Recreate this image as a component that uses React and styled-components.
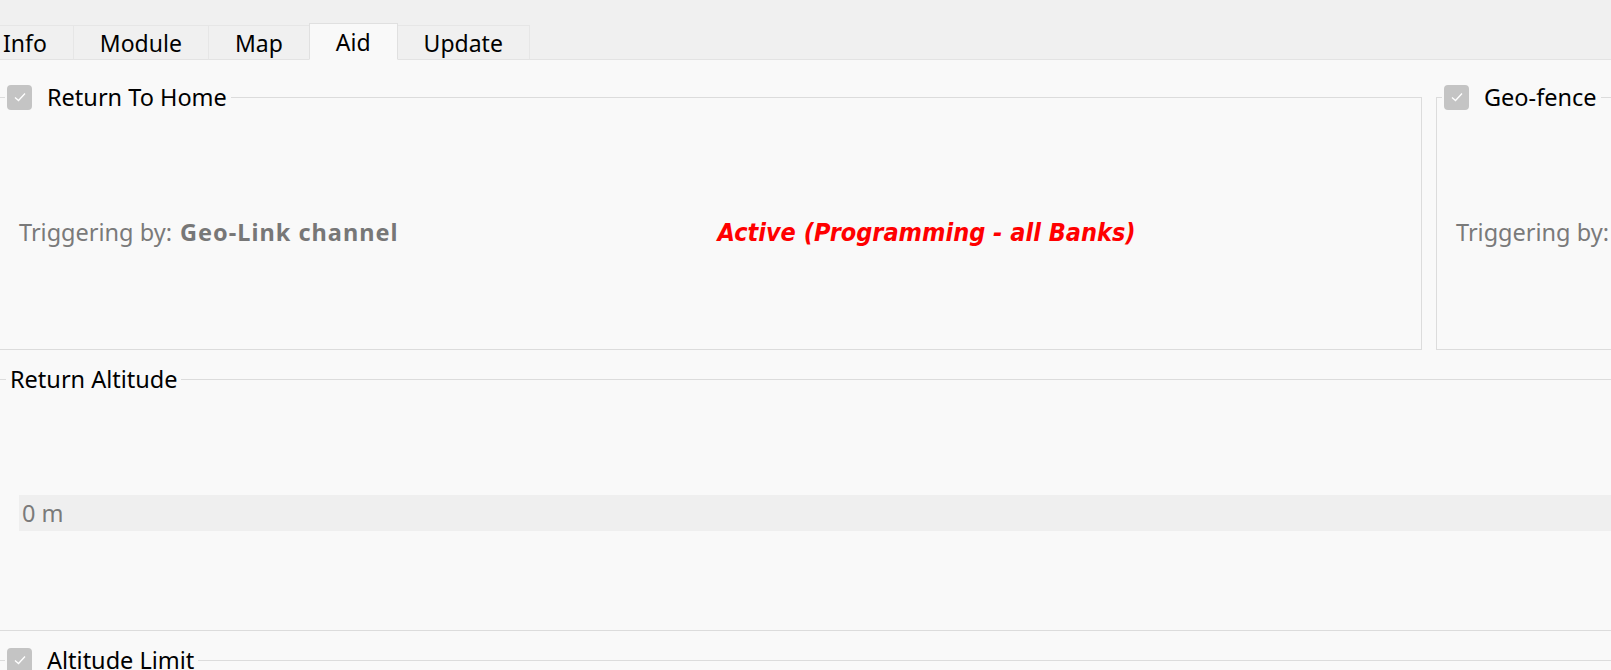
import React from 'react';
import styled, { createGlobalStyle } from 'styled-components';

const GlobalStyle = createGlobalStyle`
  html, body {
    margin: 0;
    padding: 0;
    background: #f0f0f0;
    overflow: hidden;
  }
  body {
    font-family: "Noto Sans", "Open Sans", sans-serif;
  }
`;

const Window = styled.div`
  width: 1611px;
  height: 670px;
  overflow: hidden;
  box-sizing: border-box;
  padding-top: 25px;
  display: flex;
  flex-direction: column;
  background: #f0f0f0;
  font-size: 23.5px;
  color: #000;
`;

const TabBar = styled.div`
  display: flex;
  align-items: flex-end;
  height: 35px;
  flex-shrink: 0;
  font-size: 23px;
`;

const Tab = styled.div`
  box-sizing: border-box;
  display: flex;
  align-items: center;
  justify-content: center;
  padding: ${p => (p.$first ? '0 26px 0 3px' : '0 26px')};
  height: ${p => (p.$active ? '37px' : '35px')};
  background: ${p => (p.$active ? '#f9f9f9' : '#f0f0f0')};
  border: 1px solid ${p => (p.$active ? '#e0e0e0' : '#e6e6e6')};
  border-left-width: ${p => (p.$first ? '0' : '1px')};
  border-bottom: ${p => (p.$active ? '1px solid #f9f9f9' : '1px solid #e3e3e3')};
  margin-left: ${p => (p.$first ? '0' : '-1px')};
  position: relative;
  z-index: ${p => (p.$active ? 1 : 0)};
`;

const TabFiller = styled.div`
  flex: 1;
  height: 35px;
  box-sizing: border-box;
  border-bottom: 1px solid #e3e3e3;
`;

const Panel = styled.div`
  flex: 1;
  background: #f9f9f9;
  margin-left: -1px;
  padding-top: 24px;
  display: flex;
  flex-direction: column;
  gap: 16px;
`;

const Row = styled.div`
  display: flex;
  gap: 14px;
`;

const Group = styled.fieldset`
  margin: 0;
  padding: 0;
  min-width: 0;
  width: ${p => p.$width}px;
  flex-shrink: 0;
  box-sizing: border-box;
  border: 1px solid #dcdcdc;
`;

const Legend = styled.legend`
  display: flex;
  align-items: center;
  gap: 15px;
  height: 26px;
  padding: ${p => (p.$check ? '0 4px 0 2px' : '0 3px 0 4px')};
  margin-left: ${p => (p.$check ? '5px' : '6px')};
  line-height: 26px;
  white-space: nowrap;
`;

const Box = styled.span`
  width: 25px;
  height: 25px;
  border-radius: 4px;
  background: #c4c4c4;
  display: inline-flex;
  align-items: center;
  justify-content: center;
  flex-shrink: 0;
`;

const Body = styled.div`
  box-sizing: border-box;
  height: ${p => p.$height}px;
  padding: ${p => p.$top}px 19px 0;
  display: grid;
  grid-template-columns: ${p => p.$cols || '1fr'};
  column-gap: 14px;
  align-items: center;
  white-space: nowrap;
`;

const Trigger = styled.div`
  color: #7a7a7a;

  strong {
    font-weight: 700;
    color: #777;
    margin-left: 2px;
    letter-spacing: 1px;
  }
`;

const Status = styled.div`
  color: #ff0000;
  font-family: "DejaVu Sans Condensed", "DejaVu Sans", sans-serif;
  font-weight: 700;
  font-style: italic;
  font-size: 25px;
`;

const ValueField = styled.div`
  height: 36px;
  background: #efefef;
  color: #7a7a7a;
  display: flex;
  align-items: center;
  padding-left: 3px;
`;

const Check = () => (
  <Box>
    <svg width="14" height="12" viewBox="0 0 14 12">
      <polyline points="2,6.5 5.5,9.5 12,2.5" fill="none" stroke="#fff" strokeWidth="1.3" />
    </svg>
  </Box>
);

const tabs = ['Info', 'Module', 'Map', 'Aid', 'Update'];

export default function App() {
  return (
    <>
      <GlobalStyle />
      <Window>
        <TabBar>
          {tabs.map((t, i) => (
            <Tab key={t} $first={i === 0} $active={t === 'Aid'}>{t}</Tab>
          ))}
          <TabFiller />
        </TabBar>
        <Panel>
          <Row>
            <Group $width={1423}>
              <Legend $check><Check />Return To Home</Legend>
              <Body $height={239} $top={5} $cols="1fr 1fr">
                <Trigger>Triggering by: <strong>Geo-Link channel</strong></Trigger>
                <Status>Active (Programming - all Banks)</Status>
              </Body>
            </Group>
            <Group $width={420}>
              <Legend $check><Check />Geo-fence</Legend>
              <Body $height={239} $top={5}>
                <Trigger>Triggering by:</Trigger>
              </Body>
            </Group>
          </Row>
          <Group $width={1700}>
            <Legend>Return Altitude</Legend>
            <Body $height={238} $top={4}>
              <ValueField>0 m</ValueField>
            </Body>
          </Group>
          <Group $width={1700}>
            <Legend $check><Check />Altitude Limit</Legend>
            <Body $height={200} $top={0} />
          </Group>
        </Panel>
      </Window>
    </>
  );
}
